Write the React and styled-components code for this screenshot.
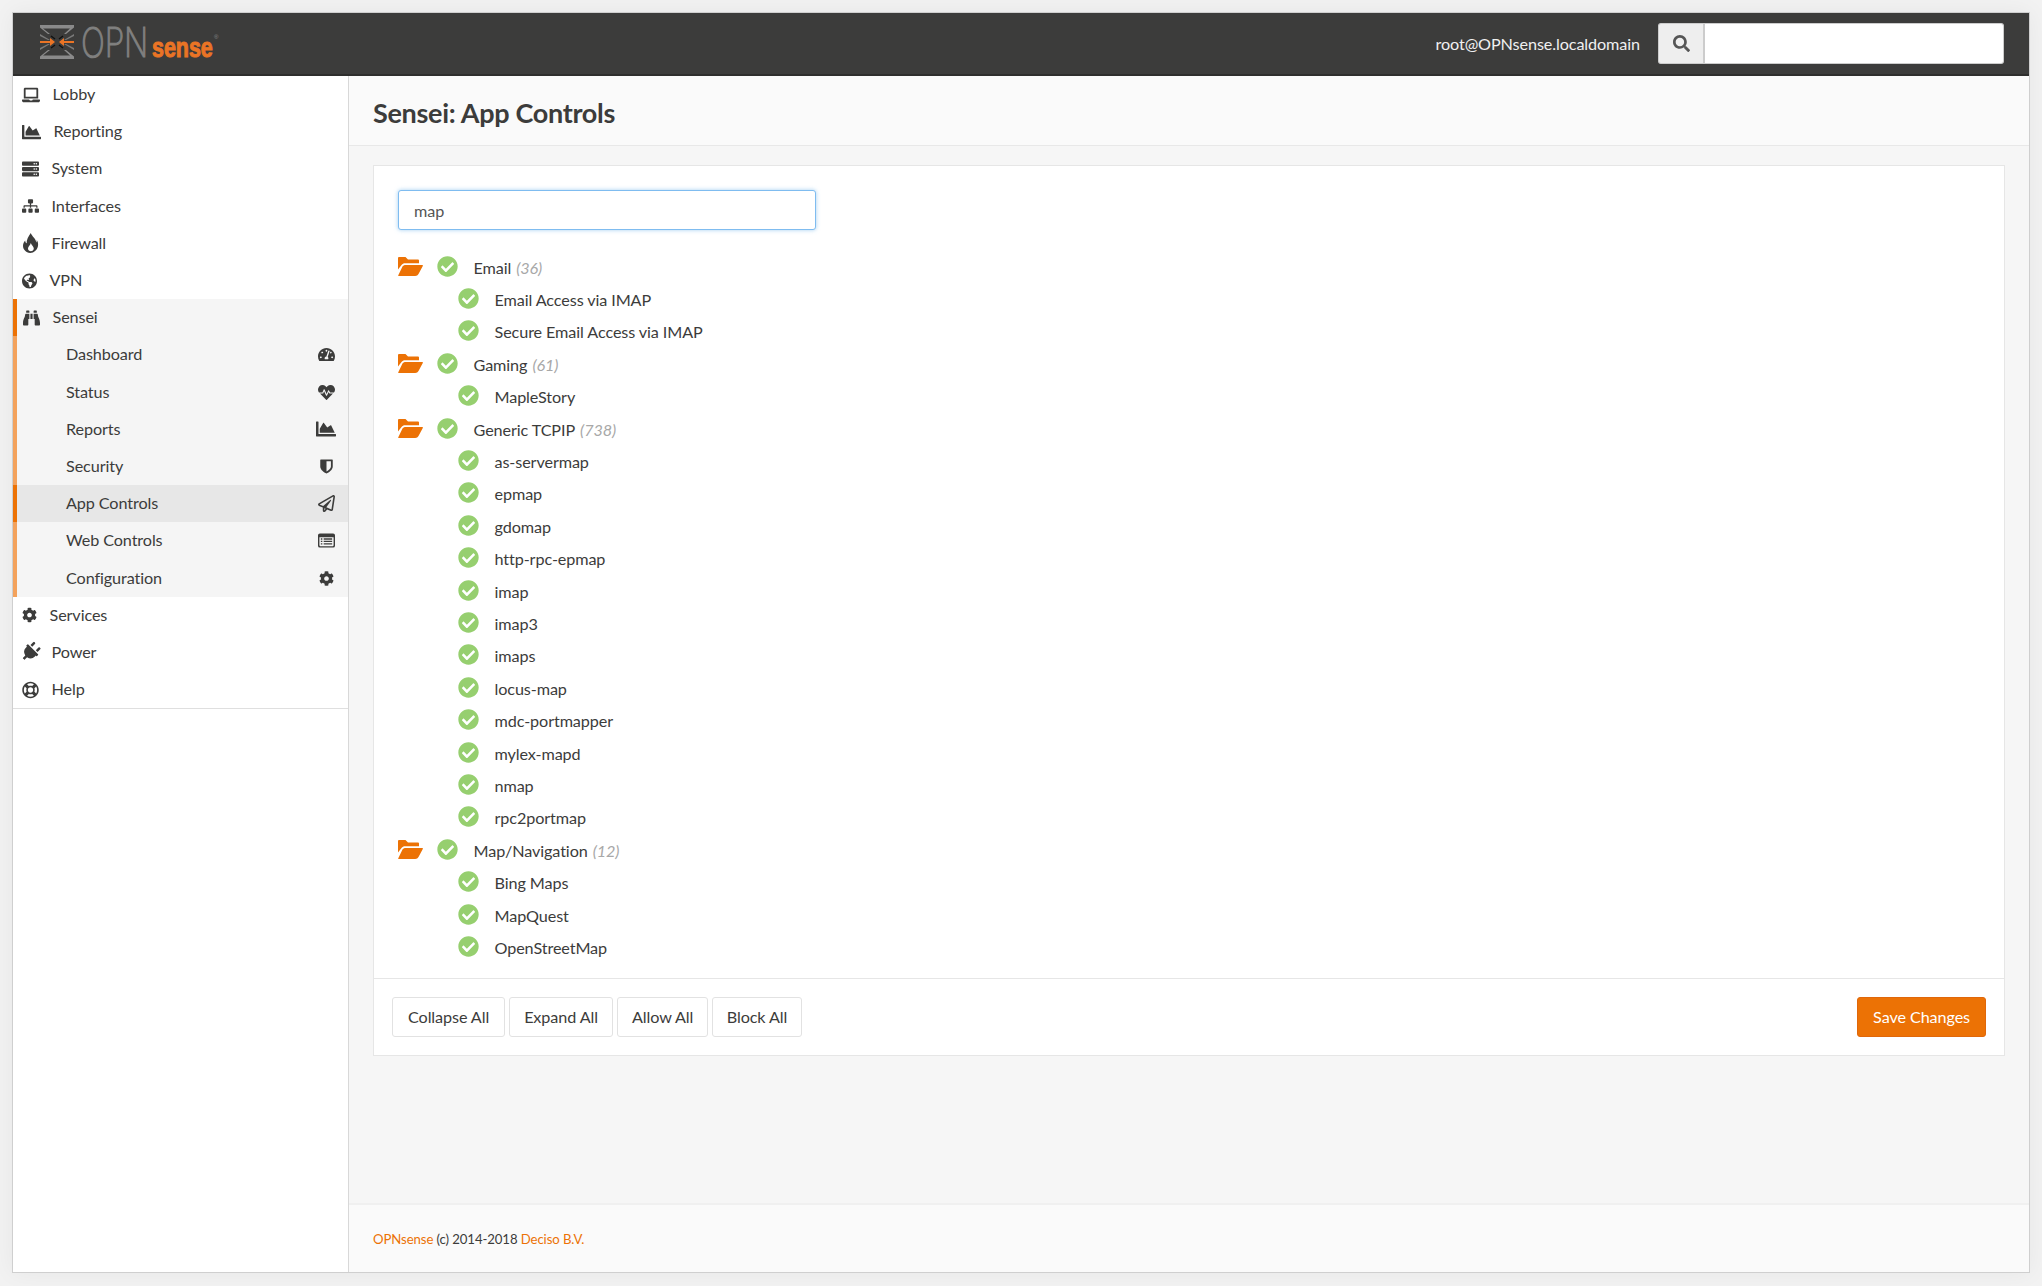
import React from "react";
import styled, { createGlobalStyle } from "styled-components";
import {
  FaLaptop, FaChartArea, FaServer, FaSitemap, FaGlobeAmericas, FaBinoculars,
  FaTachometerAlt, FaHeartbeat, FaRegPaperPlane, FaCog,
  FaPlug, FaRegLifeRing, FaSearch, FaCheckCircle,
} from "react-icons/fa";

const Global = createGlobalStyle`
  html, body { margin: 0; padding: 0; height: 100%; }
  body {
    background: #f2f2f2;
    font-family: Lato, "Noto Sans", sans-serif;
    color: #3c3c3b;
    font-size: 16.2px;
    letter-spacing: -0.1px;
  }
  * { box-sizing: border-box; }
`;

const Page = styled.div`
  height: 1286px;
  padding: 12px;
`;
const Win = styled.div`
  height: 1261px;
  border: 1px solid #cfcfcf;
  box-shadow: 0 0 22px rgba(0, 0, 0, 0.05);
  display: flex;
  flex-direction: column;
  background: #f6f6f6;
`;
const Nav = styled.header`
  height: 63px;
  flex: none;
  background: #3c3c3b;
  border-bottom: 2px solid #2e2e2d;
  display: flex;
  align-items: center;
  justify-content: space-between;
  padding: 0 25px 1px 24px;
`;
const Logo = styled.svg`
  width: 196px;
  height: 44px;
  display: block;
  overflow: visible;
`;
const NavRight = styled.div`
  display: flex;
  align-items: center;
`;
const UserName = styled.span`
  color: #f0f0f0;
  margin-right: 18px;
`;
const SearchGroup = styled.div`
  display: flex;
  width: 346px;
  height: 41px;
`;
const SearchAddon = styled.span`
  width: 47px;
  flex: none;
  display: flex;
  align-items: center;
  justify-content: center;
  background: #eeeeee;
  border: 1px solid #cccccc;
  border-right-width: 2px;
  border-radius: 3px 0 0 3px;
  color: #555;
  font-size: 17px;
`;
const SearchInput = styled.input`
  flex: 1;
  min-width: 0;
  border: 1px solid #cccccc;
  border-left: 0;
  border-radius: 0 3px 3px 0;
  background: #fff;
  outline: none;
`;
const Body = styled.div`
  flex: 1;
  display: flex;
  min-height: 0;
`;
const Side = styled.aside`
  width: 336px;
  flex: none;
  background: #fff;
  border-right: 1px solid #d8d8d8;
`;
const Menu = styled.nav`
  border-bottom: 1px solid #dfdfdf;
`;
const MenuItem = styled.div`
  height: 37.2px;
  display: flex;
  align-items: center;
  justify-content: ${(p) => (p.$sub ? "space-between" : "flex-start")};
  padding-left: ${(p) => (p.$sub ? "49px" : p.$stripe ? "6px" : "9px")};
  padding-right: 12px;
  padding-bottom: 2px;
  background: ${(p) => (p.$active ? "#e7e7e7" : p.$stripe ? "#f5f5f5" : "#fff")};
  border-left: ${(p) => (p.$stripe ? `4px solid ${p.$stripe}` : "0")};
`;
const NavIcon = styled.span`
  width: ${(p) => p.$w}px;
  height: 20px;
  margin: 0 12.5px -2px 0;
  flex: none;
  display: flex;
  align-items: center;
  justify-content: center;
  color: #3c3c3b;
  svg { width: 100%; height: 100%; display: block; transform: ${(p) => p.$turn || "none"}; }
`;
const SubIcon = styled.span`
  width: 20px;
  height: 20px;
  margin-bottom: -2px;
  flex: none;
  display: flex;
  align-items: center;
  justify-content: center;
  color: #3c3c3b;
  svg { width: ${(p) => p.$s || 17}px; height: ${(p) => p.$s || 17}px; display: block; }
`;
const Main = styled.main`
  flex: 1;
  min-width: 0;
  display: flex;
  flex-direction: column;
`;
const TitleBar = styled.div`
  height: 70px;
  flex: none;
  background: #fafafa;
  border-bottom: 1px solid #e8e8e8;
  padding: 4px 0 0 24px;
  display: flex;
  align-items: center;
`;
const Title = styled.h1`
  margin: 0;
  font-size: 27px;
  font-weight: 700;
  color: #3c3c3b;
  letter-spacing: -0.3px;
`;
const Content = styled.div`
  flex: 1;
  padding: 19px 24px 0 24px;
`;
const Card = styled.section`
  background: #fff;
  border: 1px solid #e6e6e6;
`;
const CardBody = styled.div`
  padding: 24px 24px 13.5px 24px;
`;
const Filter = styled.input`
  display: block;
  width: 418px;
  height: 40px;
  border: 1px solid #7fbcf0;
  border-radius: 3px;
  box-shadow: 0 0 4px rgba(102, 175, 233, 0.6);
  padding: 0 15px;
  font: inherit;
  letter-spacing: inherit;
  color: #555;
  outline: none;
  margin-bottom: 21.5px;
`;
const TreeRow = styled.div`
  height: 32.4px;
  display: flex;
  align-items: center;
  padding-left: ${(p) => (p.$child ? "60px" : "0")};
`;
const Folder = styled.svg`
  width: 25px;
  height: 19px;
  margin-right: 14px;
  margin-top: -3px;
  flex: none;
  display: block;
`;
const Check = styled(FaCheckCircle)`
  width: 21px;
  height: 21px;
  margin-right: 15.5px;
  margin-top: -3px;
  flex: none;
  color: #96cf6f;
`;
const Label = styled.span`
  line-height: 20px;
`;
const Count = styled.i`
  color: #a8a8a8;
  margin-left: 5px;
`;
const CardFoot = styled.div`
  border-top: 1px solid #e6e6e6;
  padding: 18px;
  display: flex;
  justify-content: space-between;
`;
const BtnRow = styled.div`
  display: flex;
  gap: 3.5px;
`;
const Btn = styled.button`
  height: 40.5px;
  padding: 0 ${(p) => p.$pad || 15}px;
  font: inherit;
  letter-spacing: inherit;
  color: #3c3c3b;
  background: #fff;
  border: 1px solid #e2e2e2;
  border-radius: 3px;
`;
const SaveBtn = styled(Btn)`
  color: #fff;
  background: #ec7205;
  border-color: #e0670a;
`;
const Foot = styled.footer`
  height: 69px;
  flex: none;
  background: #fafafa;
  border-top: 2px solid #f0f0f0;
  padding: 0 24px;
  display: flex;
  align-items: center;
  font-size: 13.2px;
`;
const Link = styled.a`
  color: #ec7205;
  text-decoration: none;
`;

const Shield = () => (
  <svg viewBox="0 0 16 18">
    <path fill="currentColor" fillRule="evenodd" d="M1.2 0.5 H14.8 A0.7 0.7 0 0 1 15.5 1.2 V9 C15.5 13 11 16 8 17.5 C5 16 0.5 13 0.5 9 V1.2 A0.7 0.7 0 0 1 1.2 0.5Z M8 2.6 V14.9 C10.5 13.5 13.3 11.5 13.3 9 V2.6Z" />
  </svg>
);
const ListAlt = () => (
  <svg viewBox="0 0 18 15">
    <path fill="currentColor" fillRule="evenodd" d="M2 0 H16 A2 2 0 0 1 18 2 V13 A2 2 0 0 1 16 15 H2 A2 2 0 0 1 0 13 V2 A2 2 0 0 1 2 0Z M1.5 4 V12.6 C1.5 13.1 1.8 13.5 2.3 13.5 H15.7 C16.2 13.5 16.5 13.1 16.5 12.6 V4Z" />
    <path fill="currentColor" d="M3 5.2 H4.6 V6.6 H3Z M6 5.2 H15 V6.6 H6Z M3 7.8 H4.6 V9.2 H3Z M6 7.8 H15 V9.2 H6Z M3 10.4 H4.6 V11.8 H3Z M6 10.4 H15 V11.8 H6Z" />
  </svg>
);
const Flame = () => (
  <svg viewBox="0 0 14.5 18">
    <path fill="currentColor" fillRule="evenodd" d="M7.5 0 C8.5 3 12 5 12.5 8.5 C13 7.5 13 6.5 12.7 6 C14 7.5 14.5 10 13.8 12.5 C13 15.5 10.5 17.5 7 18 C3 17.5 0.5 15 0.5 11.5 C0.5 9.5 1.5 8 2.5 6.8 C2.5 8 3 9 3.8 9.3 C3.5 6 5.5 3 7.5 0Z M7.5 9 C7.3 11 5 12 5 14 C5 15.7 6.3 16.5 7.5 16.5 C9 16.5 10.3 15.5 10.2 13.8 C10 12 8.2 11 7.5 9Z" />
  </svg>
);

const top1 = [
  ["Lobby", FaLaptop, 18],
  ["Reporting", FaChartArea, 19],
  ["System", FaServer, 17],
  ["Interfaces", FaSitemap, 17],
  ["Firewall", Flame, 17],
  ["VPN", FaGlobeAmericas, 15],
];
const subs = [
  ["Dashboard", FaTachometerAlt],
  ["Status", FaHeartbeat],
  ["Reports", FaChartArea, 20],
  ["Security", Shield, 15],
  ["App Controls", FaRegPaperPlane, 17, true],
  ["Web Controls", ListAlt],
  ["Configuration", FaCog, 15],
];
const top2 = [
  ["Services", FaCog, 15],
  ["Power", FaPlug, 17, "rotate(45deg)"],
  ["Help", FaRegLifeRing, 17],
];
const tree = [
  { g: "Email", c: 36, k: ["Email Access via IMAP", "Secure Email Access via IMAP"] },
  { g: "Gaming", c: 61, k: ["MapleStory"] },
  { g: "Generic TCPIP", c: 738, k: ["as-servermap", "epmap", "gdomap", "http-rpc-epmap", "imap", "imap3", "imaps", "locus-map", "mdc-portmapper", "mylex-mapd", "nmap", "rpc2portmap"] },
  { g: "Map/Navigation", c: 12, k: ["Bing Maps", "MapQuest", "OpenStreetMap"] },
];

function LogoMark() {
  return (
    <Logo viewBox="0 0 196 44">
      <g fill="#8a8a8a">
        <path d="M3 4 H37 V6.5 L29 13 H27 L33 7.5 H6 L13 13 H11 L3 6.5Z" />
        <path d="M3 38 H37 V35.5 L29 29 H27 L33 34.5 H6 L13 29 H11 L3 35.5Z" />
        <path d="M3 13 L13 19 H11 L3 15Z M37 13 L27 19 H29 L37 15Z M3 29 L13 23 H11 L3 27Z M37 29 L27 23 H29 L37 27Z" opacity="0.8" />
      </g>
      <path d="M14 15 L18 18 M26 15 L22 18 M14 27 L18 24 M26 27 L22 24" stroke="#111" strokeWidth="1.4" />
      <path d="M3 20 H13 V17 L18 21 L13 25 V22 H3Z M37 20 H27 V17 L22 21 L27 25 V22 H37Z" fill="#ea7425" />
      <g transform="translate(44 36) scale(0.77 1)">
        <text fill="#80807f" stroke="#80807f" strokeWidth="1" fontFamily="Inter" fontWeight="200" fontSize="41">OPN</text>
      </g>
      <g transform="translate(115 36) scale(0.77 1)">
        <text fill="#ea7425" stroke="#ea7425" strokeWidth="1" fontFamily="Liberation Sans" fontWeight="700" fontSize="28">sense</text>
      </g>
      <text x="177" y="18" fill="#888" fontFamily="Liberation Sans" fontSize="6">®</text>
    </Logo>
  );
}

function FolderOpen() {
  return (
    <Folder viewBox="0 0 25 19">
      <path fill="#ec7205" d="M1 0 H7.5 L10 2.5 H20 A1 1 0 0 1 21 3.5 V6.2 H7 C5.5 6.2 4.5 6.8 3.5 8 L0 12.5 V1 A1 1 0 0 1 1 0Z" />
      <path fill="#ec7205" d="M7.5 8 H24.3 C24.9 8 25.1 8.5 24.8 9 L20.5 17 C19.8 18.2 18.8 19 17.2 19 H1 C0.2 19 0 18.5 0.4 17.9 L4.5 9.5 C5.3 8.5 6.3 8 7.5 8Z" />
    </Folder>
  );
}

export default function App() {
  return (
    <Page>
      <Global />
      <Win>
        <Nav>
          <LogoMark />
          <NavRight>
            <UserName>root@OPNsense.localdomain</UserName>
            <SearchGroup>
              <SearchAddon><FaSearch /></SearchAddon>
              <SearchInput readOnly />
            </SearchGroup>
          </NavRight>
        </Nav>
        <Body>
          <Side>
            <Menu>
              {top1.map(([n, I, w]) => (
                <MenuItem key={n}>
                  <NavIcon $w={w}><I /></NavIcon>{n}
                </MenuItem>
              ))}
              <MenuItem $stripe="#ec7205">
                <NavIcon $w={17}><FaBinoculars /></NavIcon>Sensei
              </MenuItem>
              {subs.map(([n, I, s, a]) => (
                <MenuItem key={n} $sub $active={a} $stripe={a ? "#ec7205" : "#f3a25c"}>
                  {n}
                  <SubIcon $s={s}><I /></SubIcon>
                </MenuItem>
              ))}
              {top2.map(([n, I, w, turn]) => (
                <MenuItem key={n}>
                  <NavIcon $w={w} $turn={turn}><I /></NavIcon>{n}
                </MenuItem>
              ))}
            </Menu>
          </Side>
          <Main>
            <TitleBar><Title>Sensei: App Controls</Title></TitleBar>
            <Content>
              <Card>
                <CardBody>
                  <Filter defaultValue="map" />
                  {tree.map((t) => (
                    <React.Fragment key={t.g}>
                      <TreeRow>
                        <FolderOpen />
                        <Check />
                        <Label>{t.g}<Count>({t.c})</Count></Label>
                      </TreeRow>
                      {t.k.map((k) => (
                        <TreeRow key={k} $child>
                          <Check />
                          <Label>{k}</Label>
                        </TreeRow>
                      ))}
                    </React.Fragment>
                  ))}
                </CardBody>
                <CardFoot>
                  <BtnRow>
                    <Btn>Collapse All</Btn>
                    <Btn $pad={14.5}>Expand All</Btn>
                    <Btn $pad={14}>Allow All</Btn>
                    <Btn $pad={14}>Block All</Btn>
                  </BtnRow>
                  <SaveBtn>Save Changes</SaveBtn>
                </CardFoot>
              </Card>
            </Content>
            <Foot>
              <span><Link>OPNsense</Link> (c) 2014-2018 <Link>Deciso B.V.</Link></span>
            </Foot>
          </Main>
        </Body>
      </Win>
    </Page>
  );
}
